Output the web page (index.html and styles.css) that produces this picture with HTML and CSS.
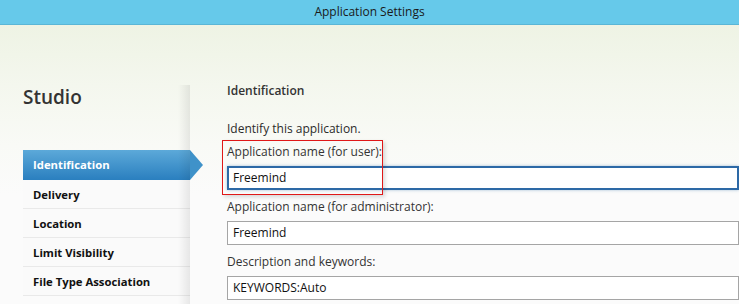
FILE: index.html
```html
<!DOCTYPE html>
<html lang="en">
<head>
    <meta charset="UTF-8">
    <title>Application Settings</title>
    <link rel="stylesheet" href="styles.css">
</head>
<body>
    <div class="topbar">Application Settings</div>
    <div class="page">
        <div class="sidebar">
            <h1 class="brand">Studio</h1>
            <ul class="nav">
                <li class="nav-item active">Identification</li>
                <li class="nav-item">Delivery</li>
                <li class="nav-item">Location</li>
                <li class="nav-item">Limit Visibility</li>
                <li class="nav-item">File Type Association</li>
            </ul>
        </div>
        <div class="content">
            <h2 class="section-title">Identification</h2>
            <p class="intro">Identify this application.</p>
            <div class="field highlight">
                <label class="field-label">Application name (for user):</label>
                <div class="input focused">Freemind</div>
            </div>
            <div class="field">
                <label class="field-label">Application name (for administrator):</label>
                <div class="input">Freemind</div>
            </div>
            <div class="field">
                <label class="field-label">Description and keywords:</label>
                <div class="input">KEYWORDS:Auto</div>
            </div>
        </div>
    </div>
</body>
</html>
```

FILE: styles.css
```css
body {
    margin: 0;
    font-family: 'Open Sans', 'Noto Sans', sans-serif;
    font-size: 12px;
    color: #2b2b2b;
    background: #fbfbfa;
    overflow: hidden;
}
.topbar {
    height: 25px;
    line-height: 24px;
    background: #66c9ea;
    border-bottom: 1px solid #5ab6d6;
    box-sizing: border-box;
    text-align: center;
    font-size: 12px;
    color: #1a1a1a;
}
.page {
    display: flex;
    height: 279px;
    background: linear-gradient(to bottom, #eef3e4 0px, #f4f7ee 60px, #f9faf6 120px, #fbfbfb 170px);
}
.sidebar {
    width: 167px;
    padding-left: 23px;
    flex-shrink: 0;
}
.brand {
    margin: 57px 0 0;
    font-size: 19px;
    font-weight: 600;
    color: #333;
    line-height: 30px;
}
.nav {
    list-style: none;
    margin: 38px 0 0;
    padding: 0;
    font-size: 11.3px;
}
.nav-item {
    height: 26px;
    line-height: 26px;
    padding: 2px 0 0 10px;
    font-weight: bold;
    color: #111;
    background: #fafafa;
    border-bottom: 1px solid #e9e9e9;
}
.nav-item.active {
    position: relative;
    height: 29px;
    line-height: 28px;
    padding-top: 1px;
    color: #fff;
    background: linear-gradient(to bottom, #5ca9d9, #2a7fbf);
    border-bottom: none;
}
.nav-item.active::after {
    content: "";
    position: absolute;
    right: -13px;
    top: 0;
    border-left: 13px solid #3f92c9;
    border-top: 15px solid transparent;
    border-bottom: 15px solid transparent;
}
.content {
    flex: 1;
    margin-top: 58px;
    padding-left: 37px;
    position: relative;
}
.content::before {
    content: "";
    position: absolute;
    left: -12px;
    top: 2px;
    bottom: 0;
    width: 12px;
    background: linear-gradient(to right, rgba(0,0,0,0), rgba(0,0,0,0.08));
}
.section-title {
    margin: 0;
    font-size: 12px;
    font-weight: 600;
    line-height: 16px;
    color: #333;
}
.intro {
    margin: 22px 0 0;
    line-height: 16px;
}
.field {
    margin-top: 5px;
}
.field-label {
    display: block;
    line-height: 16px;
    padding: 4px 0 6px;
    color: #333;
}
.highlight {
    position: relative;
    margin-top: 3px;
}
.highlight::after {
    content: "";
    position: absolute;
    left: -5px;
    top: 0;
    width: 159px;
    height: 53px;
    border: 1px solid #e01818;
    box-shadow: 2px 2px 4px rgba(0,0,0,0.15);
}
.input {
    height: 24px;
    line-height: 22px;
    box-sizing: border-box;
    border: 1px solid #a5a5a5;
    background: #fff;
    padding-left: 5px;
    color: #111;
}
.input.focused {
    border: 2px solid #2d69a6;
    line-height: 20px;
    padding-left: 4px;
    box-shadow: 0 0 3px rgba(45,105,166,0.4);
}
```
